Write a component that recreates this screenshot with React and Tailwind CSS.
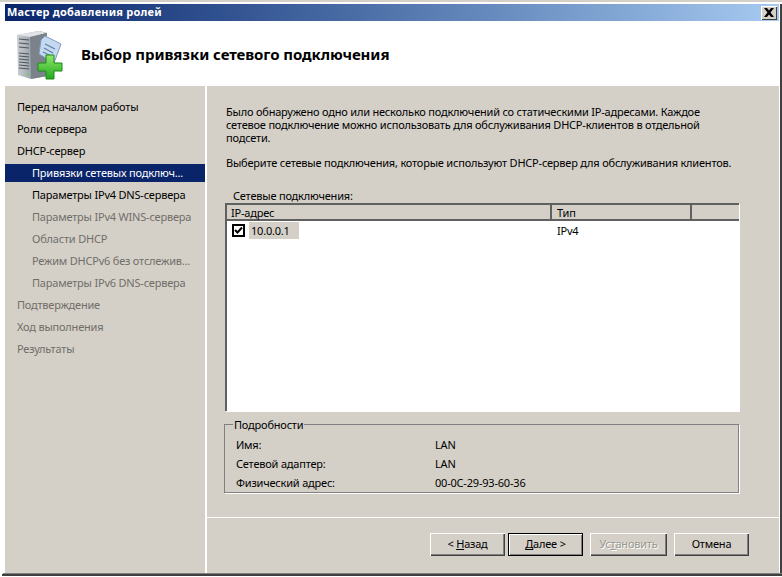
const navItems = [
  { label: 'Перед началом работы' },
  { label: 'Роли сервера' },
  { label: 'DHCP-сервер' },
  { label: 'Привязки сетевых подключ...', sub: true, active: true },
  { label: 'Параметры IPv4 DNS-сервера', sub: true },
  { label: 'Параметры IPv4 WINS-сервера', sub: true, muted: true },
  { label: 'Области DHCP', sub: true, muted: true },
  { label: 'Режим DHCPv6 без отслежив...', sub: true, muted: true },
  { label: 'Параметры IPv6 DNS-сервера', sub: true, muted: true },
  { label: 'Подтверждение', muted: true },
  { label: 'Ход выполнения', muted: true },
  { label: 'Результаты', muted: true },
];

const details = [
  ['Имя:', 'LAN'],
  ['Сетевой адаптер:', 'LAN'],
  ['Физический адрес:', '00-0C-29-93-60-36'],
];

const RoleIcon = () => (
  <svg width="48" height="50" viewBox="0 0 48 50">
    <defs>
      <linearGradient id="srv" x1="0" y1="0" x2="1" y2="0">
        <stop offset="0" stopColor="#c9ced4" />
        <stop offset="0.6" stopColor="#8f979f" />
        <stop offset="1" stopColor="#5f666d" />
      </linearGradient>
      <linearGradient id="plus" x1="0" y1="0" x2="0" y2="1">
        <stop offset="0" stopColor="#8fe86a" />
        <stop offset="1" stopColor="#22a81e" />
      </linearGradient>
    </defs>
    <path d="M0 5 L22 1 L30 3 L30 46 L14 49 L1 45 Z" fill="url(#srv)" />
    <path d="M0 5 L22 1 L30 3 L13 7 Z" fill="#dfe3e7" />
    <path d="M13 7 L30 3 L30 46 L14 49 Z" fill="#7b8289" />
    <path d="M2 9 L12 10 M2 13 L12 14 M2 17 L12 18 M2 23 L12 24 M2 26 L12 27 M2 29 L12 30 M2 32 L12 33 M2 35 L12 36 M2 38 L12 39" stroke="#4d545b" strokeWidth="1.2" />
    <rect x="10" y="43" width="2" height="2" fill="#5ee04a" />
    <path d="M28 6 L44 14 L37 33 L22 24 L24 10 Z" fill="#c5daf0" stroke="#7d9cc0" />
    <path d="M28 14 L38 19 M27 18 L36 23 M26 22 L34 26" stroke="#5f7fa8" strokeWidth="1.2" />
    <path d="M29 25 H37 V33 H45 V41 H37 V49 H29 V41 H21 V33 H29 Z" fill="url(#plus)" stroke="#1c8a1a" />
  </svg>
);

const WinButton = ({ children, primary, disabled }) => (
  <button
    className={`h-[23px] bg-[#d4d0c8] text-[11px] ${disabled ? 'w-[77px]' : 'w-[75px]'} ${
      primary
        ? 'border border-black shadow-[inset_1px_1px_0_#fff,inset_-1px_-1px_0_#808080]'
        : 'shadow-[inset_1px_1px_0_#fff,inset_-1px_-1px_0_#404040,inset_-2px_-2px_0_#808080]'
    } ${disabled ? 'text-[#9a978f] [text-shadow:1px_1px_0_#fff]' : 'text-black'}`}
  >
    {children}
  </button>
);

const HeaderCell = ({ className, children }) => (
  <div className={`h-[16px] border-r-2 border-[#606060] leading-[15px] ${className}`}>{children}</div>
);

export default function App() {
  return (
    <div className="w-[782px] h-[577px] overflow-hidden bg-white text-[11px] tracking-[-0.2px] text-black font-['Noto_Sans',sans-serif] flex flex-col">
      <div className="h-[2px] bg-[#d4d0c8]" />
      <div className="h-[2px] bg-white" />
      <div className="h-[569px] flex flex-col ml-[5px] border-r-2 border-[#404040]">
        <div className="flex-1 flex flex-col border-r border-white">
          {/* title bar */}
          <div className="h-[17px] flex items-center justify-between px-[2px] bg-gradient-to-r from-[#0a246a] to-[#a6caf0]">
            <span className="font-bold text-white tracking-[0.2px]">Мастер добавления ролей</span>
            <button className="w-[16px] h-[14px] bg-[#d4d0c8] flex items-center justify-center shadow-[inset_1px_1px_0_#fff,inset_-1px_-1px_0_#404040]">
              <svg width="10" height="9" viewBox="0 0 10 9">
                <path d="M0 0 H3 L5 2.5 L7 0 H10 L6.5 4.5 L10 9 H7 L5 6.5 L3 9 H0 L3.5 4.5 Z" fill="#000" />
              </svg>
            </button>
          </div>

          {/* header */}
          <div className="h-[65px] bg-white flex items-center">
            <div className="ml-[12px] mt-[2px]">
              <RoleIcon />
            </div>
            <h1 className="ml-[16px] mt-[2px] text-[15px] tracking-[-0.08px] font-bold">Выбор привязки сетевого подключения</h1>
          </div>

          {/* body */}
          <div className="flex-1 flex bg-[#d4d0c8]">
            <nav className="w-[202px] shrink-0 border-r-2 border-white pt-[12px] flex flex-col gap-[4px]">
              {navItems.map((item) => (
                <div
                  key={item.label}
                  className={`h-[18px] leading-[18px] whitespace-nowrap ${item.sub ? 'pl-[27px]' : 'pl-[12px]'} ${
                    item.active ? 'bg-[#0a246a] text-white' : item.muted ? 'text-[#716e68]' : 'text-black'
                  }`}
                >
                  {item.label}
                </div>
              ))}
            </nav>

            <div className="flex-1 flex flex-col">
              <main className="h-[432px] border-b border-white pl-[19px] pt-[19px]">
                <p className="leading-[13px] w-[500px]">
                  Было обнаружено одно или несколько подключений со статическими IP-адресами. Каждое сетевое подключение можно использовать для обслуживания DHCP-клиентов в отдельной подсети.
                </p>
                <p className="mt-[12px] leading-[13px] whitespace-nowrap">
                  Выберите сетевые подключения, которые используют DHCP-сервер для обслуживания клиентов.
                </p>

                <div className="mt-[20px] pl-[7px] leading-[13px]">Сетевые подключения:</div>

                {/* list view */}
                <div className="mt-[1px] -ml-[1px] w-[514px] h-[208px] bg-white border-t-2 border-l-2 border-[#606060] shadow-[1px_1px_0_#fff]">
                  <div className="flex bg-[#d4d0c8] border-b-2 border-[#606060] h-[16px]">
                    <HeaderCell className="w-[325px] pl-[4px]">IP-адрес</HeaderCell>
                    <HeaderCell className="w-[140px] pl-[5px]">Тип</HeaderCell>
                    <div className="flex-1" />
                  </div>
                  <div className="flex pt-[1px]">
                    <div className="w-[325px] flex items-center">
                      <div className="ml-[5px] w-[13px] h-[13px] border-2 border-black bg-white flex items-center justify-center">
                        <svg width="9" height="9" viewBox="0 0 9 9">
                          <path d="M1 4 L3.5 6.5 L8 1.5" fill="none" stroke="#000" strokeWidth="2" />
                        </svg>
                      </div>
                      <span className="ml-[4px] h-[17px] w-[50px] pl-[2px] leading-[17px] bg-[#d4d0c8]">10.0.0.1</span>
                    </div>
                    <div className="pl-[5px] leading-[17px]">IPv4</div>
                  </div>
                </div>

                {/* details group */}
                <fieldset className="mt-[7px] -ml-[2px] w-[515px] h-[75px] border border-[#808080] shadow-[1px_1px_0_#fff] pl-[11px]">
                  <legend className="-ml-[3px] px-[1px] leading-[13px]">Подробности</legend>
                  <div className="mt-[7px] flex flex-col gap-[6px]">
                    {details.map(([name, value]) => (
                      <div key={name} className="flex h-[13px] leading-[13px]">
                        <span className="w-[199px]">{name}</span>
                        <span>{value}</span>
                      </div>
                    ))}
                  </div>
                </fieldset>
              </main>

              <footer className="flex-1 pl-[223px] pt-[15px] flex items-start">
                <WinButton>
                  &lt; <u>Н</u>азад
                </WinButton>
                <div className="ml-[3px]">
                  <WinButton primary>
                    <u>Д</u>алее &gt;
                  </WinButton>
                </div>
                <div className="ml-[7px]">
                  <WinButton disabled>
                    Ус<u>т</u>ановить
                  </WinButton>
                </div>
                <div className="ml-[7px]">
                  <WinButton>Отмена</WinButton>
                </div>
              </footer>
            </div>
          </div>
        </div>
      </div>
      <div className="ml-[3px] h-[1px] bg-[#808080]" />
      <div className="ml-[2px] h-[2px] bg-[#404040]" />
      <div className="h-[1px] bg-white" />
    </div>
  );
}
